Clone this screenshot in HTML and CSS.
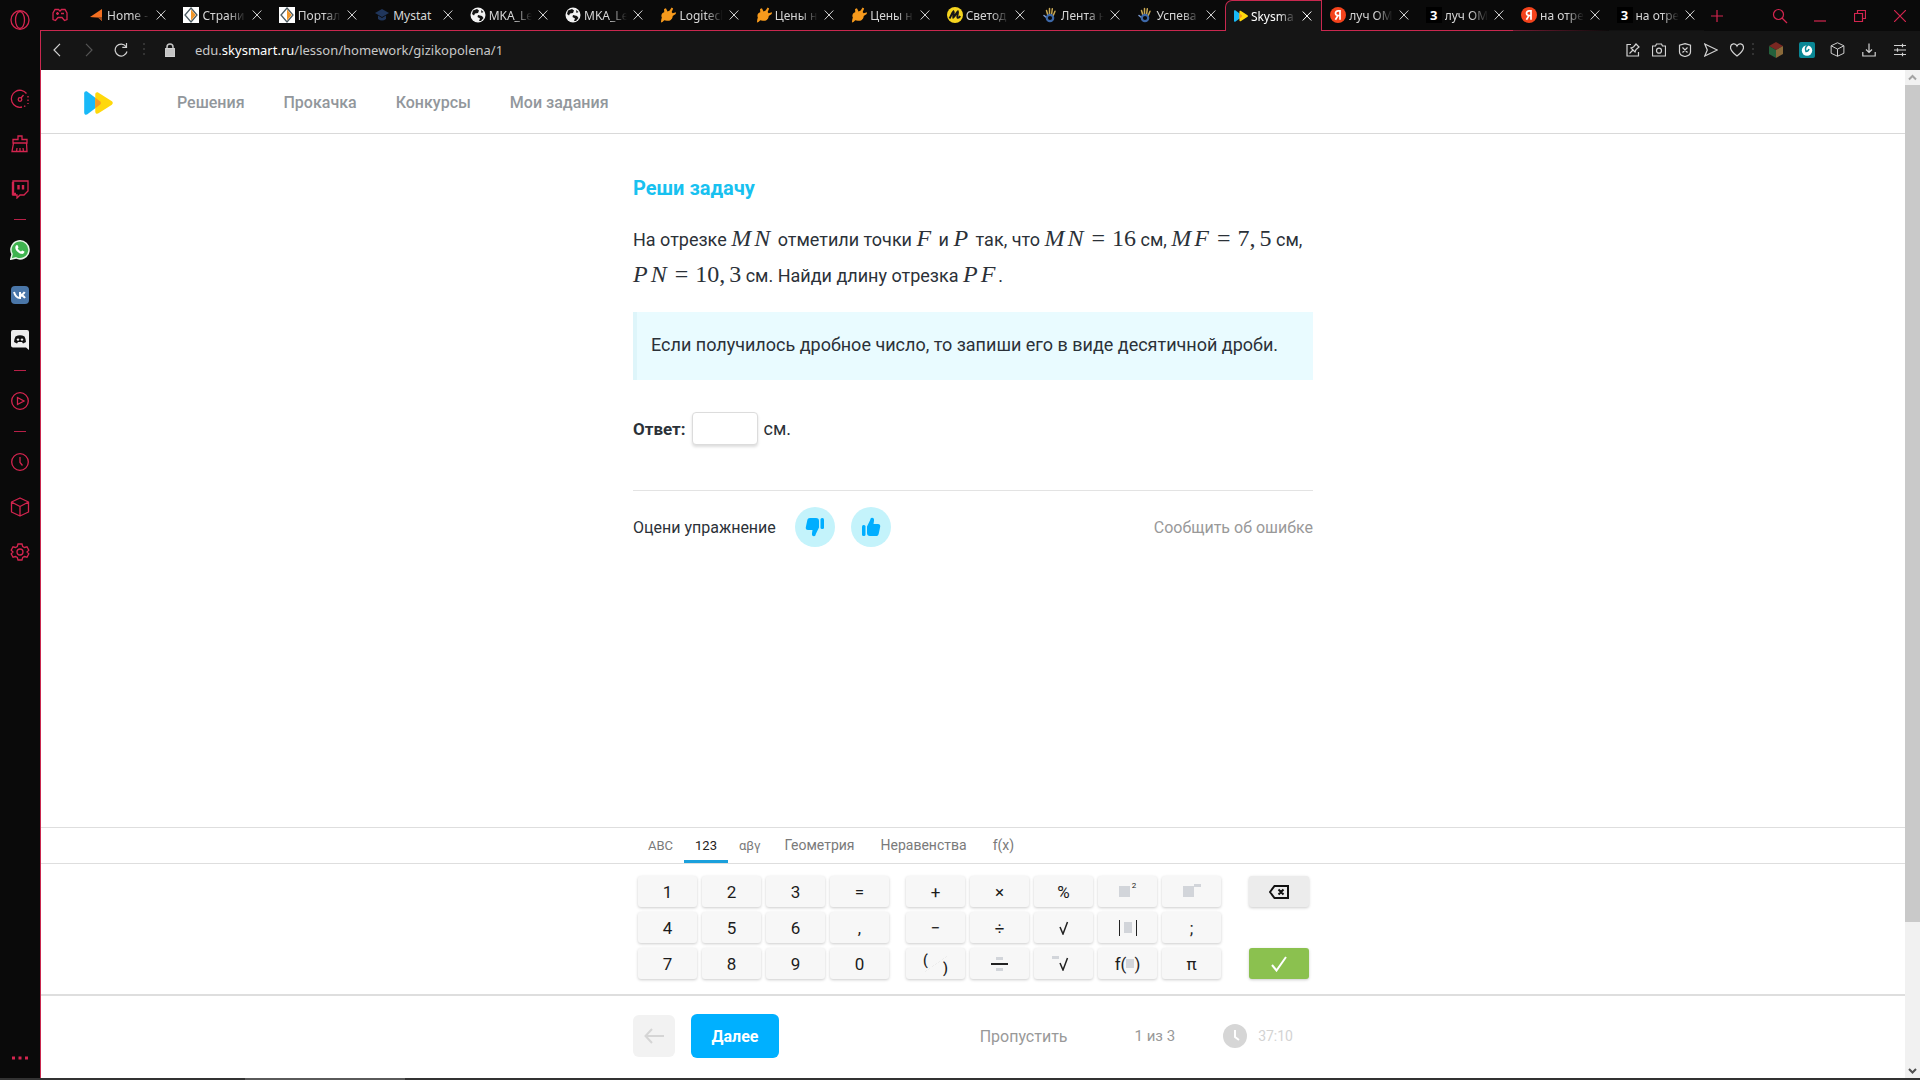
FILE: index.html
```html
<!DOCTYPE html>
<html lang="ru">
<head>
<meta charset="utf-8">
<meta name="viewport" content="width=device-width, initial-scale=1">
<title>Skysmart</title>
<link rel="stylesheet" href="styles.css">
</head>
<body>
<svg class="sprite" aria-hidden="true">
  <symbol id="x" viewBox="0 0 10 10"><path d="M.7.5l8.6 9M9.3.5l-8.6 9" fill="none" stroke="currentColor"/></symbol>
  <symbol id="diamond" viewBox="0 0 16 16"><path fill="#fff" d="M0 0h16v16H0z"/><path d="M8 1L14 8 8 15 2 8z" fill="#fff" stroke="#4b5a61" stroke-width="1.300"/><path d="M8 2.500l4.700 5.500L8 13.500z" fill="#f0962a"/></symbol>
  <symbol id="globe" viewBox="0 0 16 16"><circle cx="8" cy="8" r="7.500" fill="#f2f2f2"/><path d="M3 3.500l4-1.500 2 1.500-1 2.500-3 .5-1 2-2-1.500zM8 8l4 1 1.500 2-2.500 3H9l1-2.500L7.500 10zM11 3l2.500 2-2 1z" fill="#111"/></symbol>
  <symbol id="plug" viewBox="0 0 17 17"><path d="M1 16.500c.3-2 .2-3.500 1-5C.8 8.500 2 6 4.500 5.500L4.300 2l2-.8L8 4.700l2.300-.9 2-3.300 1.700 1-1.600 3.700 1 1.500L17 5.500l-.3 2-3.200 2c0 3-2.500 5.500-5.500 5-1.500.2-2.500-.2-3.500-.5-1 1.300-2 2.300-3.500 2.500z" fill="#f79a1c"/></symbol>
  <symbol id="em" viewBox="0 0 16 16"><circle cx="8" cy="8" r="8" fill="#f6d51f"/><path d="M2.500 11.500C4 9 5 6 6.500 4.500c1 1-.7 5-.2 6C8 9.500 9 6 10.800 4.500c.8 1.500-1.300 5-.2 6.200 1 .4 2-.6 2.700-1.500" fill="none" stroke="#171717" stroke-width="2"/></symbol>
  <symbol id="hand" viewBox="0 0 14 16"><path d="M3.500 3.500L4.800 8M6.500 1.500V8M9.300 1.800L8.500 8M12 4.300L10 9" stroke="#c9a954" stroke-width="1.500" stroke-linecap="round"/><path d="M1 8.500l2.500 2" stroke="#7b9ad0" stroke-width="1.600" stroke-linecap="round"/><circle cx="7" cy="11" r="3.200" fill="none" stroke="#3d68a8" stroke-width="2.200"/></symbol>
  <symbol id="sky" viewBox="0 0 31 26"><path d="M0 2.500C0 .5 2-.3 3.500.8L17 11c1.500 1.200 1.500 2.800 0 4L3.500 25.200C2 26.300 0 25.500 0 23.500z" fill="#18b9f8"/><path d="M12 3.500c0-2 2-2.800 3.500-1.700L30 11.200c1.300 1 1.300 2.600 0 3.600l-14.500 9.400C14 25.300 12 24.500 12 22.500z" fill="#ffd80b"/><path d="M12 7.300L17 11c1.500 1.200 1.500 2.800 0 4l-5 3.700z" fill="#f89b1f"/></symbol>
  <symbol id="ya" viewBox="0 0 16 16"><circle cx="8" cy="8" r="8" fill="#f4431c"/><path d="M10 12.700V3.800H8.200c-1.800 0-2.700 1-2.700 2.500 0 1.400.8 2.200 2.800 2.200H10M8 8.500l-2.600 4.200" fill="none" stroke="#fff" stroke-width="1.700"/></symbol>
  <symbol id="box" viewBox="0 0 20 20"><path d="M10 1l8.500 4v10L10 19l-8.500-4V5zM1.500 5l8.500 4.500L18.500 5M10 9.500V19" fill="none" stroke="currentColor" stroke-width="1.300" stroke-linejoin="round"/></symbol>
  <symbol id="thumb" viewBox="0 0 20 20"><rect x="1" y="8" width="3.500" height="11" rx="1.500" fill="#00aeff"/><path d="M6 9.500L9.200 3C9.500 1.500 10 .8 11 .8c1.600 0 2.300 1.200 2 3L12.500 7H17c1.700 0 2.500 1.200 2.200 2.700l-1.500 7c-.3 1.500-1.200 2.300-2.700 2.300H9c-2 0-3-1-3-3z" fill="#00aeff"/></symbol>
</svg>

<div class="browser">
  <aside class="sidebar">
    <button class="opera" aria-label="Меню"><svg width="20" height="20" viewBox="0 0 20 20"><ellipse cx="10" cy="10" rx="9" ry="9.300" /><ellipse cx="10" cy="10" rx="4.500" ry="8.500"/></svg></button>
    <button class="side" aria-label="Speed"><svg width="20" height="20" viewBox="0 0 20 20"><path d="M12 18a8.500 8.500 0 1 1 4.500-13.500"/><path d="M18 7v8M14 17.500l2-1" stroke-dasharray="1.500 2"/><circle cx="10" cy="10.500" r="1.800"/><path d="M11 9l2.500-3"/></svg></button>
    <button class="side" aria-label="Очистка"><svg width="20" height="20" viewBox="0 0 20 20"><path d="M3 9V5.500h5V2h4v3.500h5V9zM3.500 9L2 17.500h15L16.500 9M6.500 17.500L7 14M10 17.500V14M13.500 17.500L13 14"/></svg></button>
    <button class="side" aria-label="Twitch"><svg width="20" height="20" viewBox="0 0 20 20"><path d="M3 2h15v10l-4 4h-4l-3 3v-3H3z"/><path d="M3 3v12h3M8.500 6v4.500M13 6v4.500" stroke-width="2.400"/></svg></button>
    <hr class="sep">
    <button class="side" aria-label="WhatsApp"><svg width="20" height="20" viewBox="0 0 20 20"><path d="M.8 19.200l1.300-5A9 9 0 1 1 6 17.900z" fill="#3fb34f" stroke="#e8f5e8" stroke-width="1.500"/><path d="M6 5.500c1-1 1.600-.5 2 .6l.5 1.300-.8 1.200c.8 1.400 1.900 2.300 3.300 3l1.200-1 2.300 1c-.2 2-1.700 2.700-3.500 2.200C8 13 5.300 10 5.300 7.500c0-.8.200-1.500.7-2z" fill="#fff" stroke="none"/></svg></button>
    <button class="side" aria-label="ВКонтакте"><svg width="20" height="20" viewBox="0 0 20 20"><rect x="1" y="1" width="18" height="18" rx="4" fill="#4a76a8" stroke="none"/><path d="M4 7c1 3.500 3 6 6 6V7M10 10c2 0 3.500-1 4.700-3M10 10c2.500 0 3.700 1 5 3" stroke="#fff" stroke-width="2"/></svg></button>
    <button class="side" aria-label="Discord"><svg width="20" height="20" viewBox="0 0 20 20"><path d="M3 0h14a2 2 0 0 1 2 2v18l-3-2.500H3a2 2 0 0 1-2-2V2a2 2 0 0 1 2-2z" fill="#eee" stroke="none"/><path d="M5.500 6.500Q10 4 14.500 6.500 16 9.500 16 12l-3 1.500-1-1.500H8l-1 1.500L4 12q0-2.500 1.500-5.500z" fill="#111" stroke="none"/><circle cx="8" cy="9.600" r="1.200" fill="#eee" stroke="none"/><circle cx="12" cy="9.600" r="1.200" fill="#eee" stroke="none"/></svg></button>
    <hr class="sep">
    <button class="side" aria-label="Плеер"><svg width="20" height="20" viewBox="0 0 20 20"><circle cx="10" cy="10" r="8.300"/><path d="M7.500 6.500v7l6.500-3.500z"/></svg></button>
    <hr class="sep">
    <button class="side" aria-label="История"><svg width="20" height="20" viewBox="0 0 20 20"><circle cx="10" cy="10" r="8.300"/><path d="M10 5v5.500l2.500 3"/></svg></button>
    <button class="side" aria-label="Расширения"><svg width="20" height="20"><use href="#box"/></svg></button>
    <button class="side" aria-label="Настройки"><svg width="20" height="20" viewBox="0 0 20 20"><circle cx="10" cy="10" r="3"/><path d="M8 2h4l.7 2.500 1.800 1 2.500-.7 1.800 3.300L17 10l1.800 1.900-1.800 3.300-2.500-.7-1.800 1L12 18H8l-.7-2.500-1.800-1-2.500.7-1.800-3.300L3 10 1.200 8.100 3 4.800l2.500.7 1.800-1z"/></svg></button>
    <button class="dots" aria-label="Ещё"><svg width="20" height="6" viewBox="0 0 20 6"><path d="M2 3h3M8.500 3h3M15 3h3" stroke-width="3"/></svg></button>
  </aside>

  <div class="window">
    <div class="tabbar">
      <button class="gx" aria-label="GX"><svg width="16" height="14" viewBox="0 0 16 14"><path d="M3 1.500h3.500L8 3l1.500-1.500H13L15 5v6.500l-2.500 1L10 9.500H6l-2.500 3-2.500-1V5zM4 5.500h3M9 5.500h3M5.500 4v3" fill="none" stroke="currentColor" stroke-width="1.300"/></svg></button>
      <div class="tabs">
        <div class="tab"><svg class="fav"  viewBox="0 0 16 16"><path d="M14 2v12l-4-3.500L2 10z" fill="#f36f21"/><path d="M2 10l8 .5 4 3.500v-4z" fill="#9d4a1c"/></svg><button class="title">Home - </button><button class="close" aria-label="Закрыть"><svg><use href="#x"/></svg></button></div>
        <div class="tab"><svg class="fav"><use href="#diamond"/></svg><button class="title">Страни</button><button class="close" aria-label="Закрыть"><svg><use href="#x"/></svg></button></div>
        <div class="tab"><svg class="fav"><use href="#diamond"/></svg><button class="title">Портал</button><button class="close" aria-label="Закрыть"><svg><use href="#x"/></svg></button></div>
        <div class="tab"><svg class="fav" viewBox="0 0 16 16"><path d="M1 6l7-4 7 4-7 4zM4 8.500V12q4 3 8 0V8.500L8 11z" fill="#20365c"/></svg><button class="title title-full">Mystat</button><button class="close" aria-label="Закрыть"><svg><use href="#x"/></svg></button></div>
        <div class="tab"><svg class="fav"><use href="#globe"/></svg><button class="title">MKA_Le</button><button class="close" aria-label="Закрыть"><svg><use href="#x"/></svg></button></div>
        <div class="tab"><svg class="fav"><use href="#globe"/></svg><button class="title">MKA_Le</button><button class="close" aria-label="Закрыть"><svg><use href="#x"/></svg></button></div>
        <div class="tab"><svg class="fav"><use href="#plug"/></svg><button class="title">Logitecl</button><button class="close" aria-label="Закрыть"><svg><use href="#x"/></svg></button></div>
        <div class="tab"><svg class="fav"><use href="#plug"/></svg><button class="title">Цены н</button><button class="close" aria-label="Закрыть"><svg><use href="#x"/></svg></button></div>
        <div class="tab"><svg class="fav"><use href="#plug"/></svg><button class="title">Цены н</button><button class="close" aria-label="Закрыть"><svg><use href="#x"/></svg></button></div>
        <div class="tab"><svg class="fav"><use href="#em"/></svg><button class="title">Светод</button><button class="close" aria-label="Закрыть"><svg><use href="#x"/></svg></button></div>
        <div class="tab"><svg class="fav"><use href="#hand"/></svg><button class="title">Лента н</button><button class="close" aria-label="Закрыть"><svg><use href="#x"/></svg></button></div>
        <div class="tab"><svg class="fav"><use href="#hand"/></svg><button class="title">Успева</button><button class="close" aria-label="Закрыть"><svg><use href="#x"/></svg></button></div>
        <div class="tab tab-active"><svg class="fav"><use href="#sky"/></svg><button class="title">Skysma</button><button class="close" aria-label="Закрыть"><svg><use href="#x"/></svg></button></div>
        <div class="tab"><svg class="fav"><use href="#ya"/></svg><button class="title">луч ОМ</button><button class="close" aria-label="Закрыть"><svg><use href="#x"/></svg></button></div>
        <div class="tab"><span class="fav three">3</span><button class="title">луч ОМ</button><button class="close" aria-label="Закрыть"><svg><use href="#x"/></svg></button></div>
        <div class="tab tab-fade"><svg class="fav"><use href="#ya"/></svg><button class="title">на отре</button><button class="close" aria-label="Закрыть"><svg><use href="#x"/></svg></button></div>
        <div class="tab tab-plain"><span class="fav three">3</span><button class="title">на отре</button><button class="close" aria-label="Закрыть"><svg><use href="#x"/></svg></button></div>
      </div>
      <div class="wincontrols">
        <button aria-label="Новая вкладка"><svg width="12" height="12" viewBox="0 0 12 12"><path d="M6 0v12M0 6h12"/></svg></button>
        <button class="push" aria-label="Поиск"><svg width="16" height="16" viewBox="0 0 16 16"><circle cx="6.500" cy="6.500" r="5"/><path d="M10 10l5 5"/></svg></button>
        <button aria-label="Свернуть"><svg width="12" height="12" viewBox="0 0 12 12"><path d="M0 11h12"/></svg></button>
        <button aria-label="Развернуть"><svg width="12" height="12" viewBox="0 0 12 12"><path d="M.5 3.500h8v8h-8zM3.500 3V.5h8v8H9"/></svg></button>
        <button aria-label="Закрыть окно"><svg width="12" height="12" viewBox="0 0 12 12"><path d="M0 0l12 12M12 0L0 12"/></svg></button>
      </div>
    </div>

    <div class="address">
      <button class="nav" aria-label="Назад"><svg width="8" height="14" viewBox="0 0 8 14"><path d="M7 .8L1 7l6 6.200"/></svg></button>
      <button class="nav nav-off" aria-label="Вперёд"><svg width="8" height="14" viewBox="0 0 8 14"><path d="M1 .8L7 7l-6 6.200"/></svg></button>
      <button class="nav" aria-label="Обновить"><svg width="14" height="14" viewBox="0 0 14 14"><path d="M13 8.500A6 6 0 1 1 12 3.500M12.500 0v4.300H8.300"/></svg></button>
      <span class="vdots"></span>
      <svg class="lock" width="10" height="14" viewBox="0 0 10 14"><path d="M2 6V4a3 3 0 0 1 6 0v2" fill="none" stroke="#c4c4c4" stroke-width="1.500"/><rect y="5.500" width="10" height="8" rx="1" fill="#c4c4c4"/></svg>
      <div class="url" role="textbox" aria-label="Адрес">edu.<span class="host">skysmart.ru</span>/lesson/homework/gizikopolena/1</div>
      <div class="tools">
        <button aria-label="Закрепить"><svg width="14" height="14" viewBox="0 0 14 14"><path d="M5 1.500H1v11.500h11.500V9M3.500 10.500L7 7M5 5l4 4 1-2.500L13 4 10 1 7.500 4z"/></svg></button>
        <button aria-label="Снимок"><svg width="14" height="14" viewBox="0 0 14 14"><path d="M.5 3h3L4.500 1h5l1 2h3v10H.5z"/><circle cx="7" cy="7.700" r="2.500"/></svg></button>
        <button aria-label="Блокировка"><svg width="14" height="14" viewBox="0 0 14 14"><path d="M7 .7l5.500 1.500V9c0 2.500-3 4-5.500 4.500C4.500 13 1.500 11.500 1.500 9V2.200zM4.500 4.500l5 5M9.500 4.500l-5 5"/></svg></button>
        <button aria-label="Отправить"><svg width="14" height="14" viewBox="0 0 14 14"><path d="M.8 1l12.500 6L.8 13l2.500-6z"/></svg></button>
        <button aria-label="Избранное"><svg width="14" height="14" viewBox="0 0 14 14"><path d="M7 13C2.500 9.500.5 7.500.5 4.500c0-4 5-5 6.500-1.500C8.500-.5 13.500.5 13.500 4.500 13.500 7.500 11.500 9.500 7 13z"/></svg></button>
        <span class="vdots"></span>
        <div class="exts">
          <button aria-label="Кубик"><svg width="16" height="16" viewBox="0 0 16 16"><g stroke="none"><path d="M8 0l7 4-7 4-7-4z" fill="#7a2722"/><path d="M1 4l7 4v8l-7-4z" fill="#24613c"/><path d="M15 4L8 8v8l7-4z" fill="#8a6a3a"/></g></svg></button>
          <button aria-label="Переводчик"><svg width="16" height="16" viewBox="0 0 16 16"><rect width="16" height="16" rx="2" fill="#0a8795" stroke="none"/><circle cx="8" cy="8.500" r="5.200" fill="#fff" stroke="none"/><path d="M9 3C6.500 4.500 6 7 7 9.500c1.500 0 2.500-1 3-2.500" stroke="#0a8795" stroke-width="1.500"/></svg></button>
          <button aria-label="Расширения"><svg width="15" height="15"><use href="#box"/></svg></button>
          <button aria-label="Загрузки"><svg width="14" height="14" viewBox="0 0 14 14"><path d="M7 .5v9M4 6.500l3 3 3-3M.8 9v4h12.400V9"/></svg></button>
          <button aria-label="Настройка"><svg width="14" height="14" viewBox="0 0 14 14"><path d="M1 2.500h12M1 7h12M1 11.500h12M9.500.8v3.400M4.500 5.300v3.400M9.500 9.800v3.400"/></svg></button>
        </div>
      </div>
    </div>

    <div class="viewport">
      <div class="page">
        <header class="header">
          <a class="logo" href="#" aria-label="Skysmart"><svg width="31" height="24"><use href="#sky"/></svg></a>
          <nav class="menu"><a href="#">Решения</a><a href="#">Прокачка</a><a href="#">Конкурсы</a><a href="#">Мои задания</a></nav>
        </header>

        <main class="content">
          <article class="column">
            <h1>Реши задачу</h1>
            <p class="task">На отрезке <span class="math"><i>M</i><i>N</i></span> отметили точки <span class="math"><i>F</i></span> и <span class="math"><i>P</i></span> так, что <span class="math"><i>M</i><i>N</i><b>=</b>16</span> см, <span class="math"><i>M</i><i>F</i><b>=</b>7<u>,</u>5</span> см, <span class="math"><i>P</i><i>N</i><b>=</b>10<u>,</u>3</span> см. Найди длину отрезка <span class="math"><i>P</i><i>F</i></span>.</p>
            <div class="hint">Если получилось дробное число, то запиши его в виде десятичной дроби.</div>
            <div class="answer"><label for="answer">Ответ:</label><input id="answer" type="text"><span>см.</span></div>
            <div class="rate">
              <span class="rate-label">Оцени упражнение</span>
              <button class="vote" aria-label="Не нравится"><svg class="down" width="20" height="20"><use href="#thumb"/></svg></button>
              <button class="vote" aria-label="Нравится"><svg width="20" height="20"><use href="#thumb"/></svg></button>
              <a class="report" href="#">Сообщить об ошибке</a>
            </div>
          </article>
        </main>

        <section class="keyboard">
          <div class="modes"><div class="modes-in"><button class="short">ABC</button><button class="short on">123</button><button class="short">αβγ</button><button>Геометрия</button><button>Неравенства</button><button>f(x)</button></div></div>
          <div class="keys">
            <div class="pad four">
              <button>1</button><button>2</button><button>3</button><button>=</button>
              <button>4</button><button>5</button><button>6</button><button>,</button>
              <button>7</button><button>8</button><button>9</button><button>0</button>
            </div>
            <div class="pad five">
              <button>+</button><button>×</button><button>%</button>
              <button aria-label="Квадрат"><span class="sq"></span><sup>2</sup></button>
              <button aria-label="Степень"><span class="sq"></span><span class="bit bit-up"></span></button>
              <button>−</button><button>÷</button><button aria-label="Корень"><svg width="10" height="14" viewBox="0 0 10 14"><path d="M1 6l3 7L8.500 1" fill="none" stroke="#222" stroke-width="1.500"/></svg></button>
              <button class="abs" aria-label="Модуль"><span class="sq"></span></button>
              <button>;</button>
              <button class="paren"><span>(</span><span>)</span></button>
              <button class="frac" aria-label="Дробь"><span class="bit"></span><span class="bar"></span><span class="bit"></span></button>
              <button class="root" aria-label="Корень степени"><span class="bit bit-up"></span><svg width="10" height="14" viewBox="0 0 10 14"><path d="M1 6l3 7L8.500 1" fill="none" stroke="#222" stroke-width="1.500"/></svg></button>
              <button>f(<span class="sq sq-s"></span>)</button><button>π</button>
            </div>
            <div class="acts">
              <button class="del" aria-label="Стереть"><svg width="20" height="14" viewBox="0 0 20 14"><path d="M5.500 1H19v12H5.500L1 7zM9.500 4.500l5 5M14.500 4.500l-5 5" fill="none" stroke="#111" stroke-width="2"/></svg></button>
              <button class="ok" aria-label="Готово"><svg width="16" height="16" viewBox="0 0 16 16"><path d="M1 9l4.500 5.500L15 1" fill="none" stroke="#fff" stroke-width="2"/></svg></button>
            </div>
          </div>
        </section>

        <footer class="footer">
          <div class="footer-in">
            <button class="prev" aria-label="Назад"><svg width="20" height="16" viewBox="0 0 20 16"><path d="M20 8H1.500M8 1L1.500 8 8 15" fill="none" stroke="#d5d5d5" stroke-width="2"/></svg></button>
            <button class="next">Далее</button>
            <div class="status">
              <a class="skip" href="#">Пропустить</a><span class="count">1 из 3</span>
              <svg width="24" height="24" viewBox="0 0 24 24"><circle cx="12" cy="12" r="12" fill="#d6d6d6"/><path d="M12 6v7l4 3" fill="none" stroke="#fff" stroke-width="2"/></svg>
              <span class="time">37:10</span>
            </div>
          </div>
        </footer>
      </div>
      <div class="scroll" aria-hidden="true">
        <svg width="15" height="15" viewBox="0 0 15 15"><path d="M4 9.500L7.500 6 11 9.500" fill="none" stroke="#a3a3a3" stroke-width="2"/></svg>
        <div class="thumb"></div><div class="track"></div>
        <svg width="15" height="15" viewBox="0 0 15 15"><path d="M4 6l3.500 3.500L11 6" fill="none" stroke="#505050" stroke-width="2"/></svg>
      </div>
    </div>
  </div>
</div>
<div class="taskbar"><div class="task-item"></div></div>
</body>
</html>
```
FILE: styles.css
```css
* { box-sizing: border-box; }
body {
  margin: 0;
  height: 100vh;
  display: flex;
  flex-direction: column;
  overflow: hidden;
  font-family: Roboto, "Liberation Sans", sans-serif;
  color: #2b3138;
  background: #fff;
}
button { border: 0; padding: 0; margin: 0; background: none; color: inherit; font: inherit; cursor: pointer; }
a { color: inherit; text-decoration: none; }
svg { display: block; flex: none; }
.sprite { position: absolute; width: 0; height: 0; }

.browser { flex: 1; min-height: 0; display: flex; background: #0a0a0a; }
.window { flex: 1; min-width: 0; display: flex; flex-direction: column; }

/* sidebar */
.sidebar { width: 40px; display: flex; flex-direction: column; align-items: center; color: #d4254f; }
.sidebar svg { fill: none; stroke: currentColor; stroke-width: 1.3; }
.opera { height: 40px; margin-bottom: 36px; }
.side { height: 45px; }
.sep { width: 12px; height: 1px; margin: 8px 0 7px; border: 0; background: #b92048; }
.dots { margin-top: auto; height: 40px; }

/* tab strip */
.tabbar { height: 31px; display: flex; color: #d4254f; }
.gx { width: 40px; display: flex; justify-content: center; align-items: center; border-bottom: 1px solid #c9284f; }
.tabs { flex: 1; display: flex; min-width: 0; }
.tab {
  flex: 1 1 0;
  min-width: 0;
  display: flex;
  align-items: center;
  padding: 0 9px 0 8px;
  border-bottom: 1px solid #c9284f;
  color: #d6d6d6;
  font: 12px "Noto Sans", sans-serif;
}
.tab-active { background: #151515; color: #fff; border: 1px solid #c9284f; border-bottom: 0; border-radius: 7px 0 0 0; }
.tab-fade { border-image: linear-gradient(90deg, #7c1c35, #0a0a0a) 1; }
.tab-plain { border-color: #111; }
.fav { width: 16px; height: 16px; flex: none; }
.tab-active .fav { width: 14px; }
.three { font-weight: 700; line-height: 16px; text-align: center; color: #fff; background: #000; font-size: 13px; }
.title {
  flex: 1;
  min-width: 0;
  margin-left: 3px;
  text-align: left;
  white-space: nowrap;
  -webkit-mask-image: linear-gradient(90deg, #000 60%, transparent);
  mask-image: linear-gradient(90deg, #000 60%, transparent);
}
.title-full { -webkit-mask-image: none; mask-image: none; }
.close { margin-left: 6px; }
.close svg { width: 10px; height: 10px; }
.wincontrols { width: 216px; display: flex; align-items: center; }
.wincontrols button { width: 40px; display: flex; justify-content: center; }
.wincontrols button:first-child { width: 26px; }
.wincontrols .push { margin-left: 30px; }
.wincontrols svg { fill: none; stroke: currentColor; stroke-width: 1.2; }

/* address bar */
.address { height: 39px; padding-bottom: 2px; display: flex; align-items: center; background: #151515; border-left: 1px solid #c9284f; color: #d2d2d2; }
.address svg { fill: none; stroke: currentColor; stroke-width: 1.2; }
.nav { width: 32px; display: flex; justify-content: center; }
.nav-off { color: #555; }
.vdots { width: 2px; height: 14px; margin: 0 6px; background: repeating-linear-gradient(#333 0 2px, transparent 2px 5px); }
.lock { margin: 0 20px 0 14px; }
.url { flex: 1; font: 13px "Noto Sans", sans-serif; color: #c8c8c8; }
.host { color: #fff; }
.tools, .exts { display: flex; align-items: center; }
.tools .vdots { margin-left: 2px; }
.tools button { width: 26px; display: flex; justify-content: center; }
.tools .exts button { width: 31px; }
.exts { margin-right: 5px; }

/* page */
.viewport { flex: 1; min-height: 0; display: flex; background: #fff; border-left: 1px solid #c9284f; }
.page { flex: 1; min-width: 0; display: flex; flex-direction: column; }
.scroll { width: 15px; display: flex; flex-direction: column; background: #f1f1f1; }
.thumb { flex: 837; background: #c9c9c9; }
.track { flex: 141; }

.header { height: 64px; display: flex; align-items: center; padding: 2px 0 0 42px; border-bottom: 1px solid #d9d9d9; }
.logo { width: 94px; }
.menu { display: flex; gap: 39px; font-size: 16px; font-weight: 500; color: #92979c; }

.content { flex: 1; }
.column { width: 680px; max-width: 100%; margin: 0 auto; padding-top: 40px; }
h1 { margin: 0 0 20px; font-size: 20px; line-height: 28px; font-weight: 700; color: #18c1f0; }
.task { margin: 0 0 18px; font-size: 18px; line-height: 36px; }
.math { font: 24px/30px "Liberation Serif", serif; white-space: nowrap; }
.math i { margin-right: 3px; }
.math b { margin: 0 7px 0 5px; font-weight: 400; }
.math u { margin-right: 4px; text-decoration: none; }
.hint { padding: 15px 14px 17px; border-left: 4px solid #def5fa; background: #e9fbff; font-size: 18px; line-height: 36px; }
.answer { display: flex; align-items: center; gap: 6px; margin: 32px 0 45px; font-size: 18px; }
.answer label { font-size: 17px; font-weight: 700; }
.answer input { width: 66px; height: 33px; border: 1px solid #dcdcdc; border-radius: 4px; box-shadow: 0 2px 3px #ddd; background: #fff; font: inherit; }
.rate { display: flex; align-items: center; gap: 16px; padding-top: 16px; border-top: 1px solid #e3e3e3; font-size: 16px; }
.rate-label { margin-right: 3px; }
.vote { width: 40px; height: 40px; border-radius: 50%; background: #c4f3fb; display: flex; align-items: center; justify-content: center; }
.down { transform: rotate(180deg); }
.report { margin-left: auto; color: #999; }

/* math keyboard */
.keyboard { border-top: 1px solid #dedede; }
.modes { border-bottom: 1px solid #dedede; }
.modes-in, .keys, .footer-in { width: 680px; max-width: 100%; margin: 0 auto; display: flex; }
.modes-in { padding-left: 4px; }
.modes button { height: 35px; padding: 2px 13px 0; font-size: 14px; color: #7a7a7a; border-bottom: 3px solid transparent; }
.modes .short { padding: 2px 11px 0; font-size: 13px; }
.modes .on { color: #222; border-color: #1ba0dc; }
.keys { padding: 12px 4px 15px 5px; color: #1c1c1c; }
.pad { display: grid; gap: 5px; grid-auto-rows: 31px; }
.four { grid-template-columns: repeat(4, 59px); }
.five { grid-template-columns: repeat(5, 59px); margin-left: 17px; }
.pad button, .acts button { display: flex; align-items: center; justify-content: center; border-radius: 3px; background: #f7f7f7; box-shadow: 0 1px 3px #ccc; font-size: 17px; }
.acts { margin-left: auto; display: flex; flex-direction: column; justify-content: space-between; }
.acts button { width: 60px; height: 31px; }
.acts .del { background: #ececec; }
.acts .ok { background: #8bc14f; }
.sq { width: 11px; height: 11px; background: #d2d5da; }
.sq-s { width: 8px; height: 9px; }
.pad sup { font-size: 8px; align-self: flex-start; margin: 4px 0 0 2px; line-height: 12px; }
.bit { width: 7px; height: 3px; background: #d2d5da; }
.bit-up { margin-bottom: 12px; }
.pad .root { padding-right: 6px; }
.abs .sq { width: 16px; border: solid #f7f7f7; border-width: 0 4px; }
.pad .abs::before, .pad .abs::after { content: ""; width: 1px; height: 16px; background: #222; }
.pad .frac { flex-direction: column; gap: 3px; }
.bar { width: 17px; height: 2px; background: #222; }
.pad .paren {
  justify-content: space-between;
  padding: 0 17px;
  font-size: 14px;
  font-weight: 500;
  background: linear-gradient(145deg, transparent 49%, #ececec 49% 51%, transparent 51%) center / 24px 18px no-repeat #f7f7f7;
}
.paren span:first-child { margin-bottom: 8px; }
.paren span:last-child { margin-top: 8px; }

/* footer */
.footer { border-top: 2px solid #dedede; }
.footer-in { height: 82px; padding-bottom: 2px; align-items: center; }
.prev { width: 42px; height: 42px; border-radius: 6px; background: #f2f2f2; display: flex; align-items: center; justify-content: center; }
.next { width: 88px; height: 44px; margin-left: 16px; border-radius: 6px; background: #00b0ff; color: #fff; font-size: 16px; font-weight: 700; }
.status { margin-left: auto; padding-right: 20px; display: flex; align-items: center; font-size: 16px; color: #999; }
.count { margin: 0 48px 0 67px; font-size: 15px; }
.time { margin-left: 11px; font-size: 14px; color: #d3d3d3; white-space: nowrap; }

.taskbar { height: 2px; background: #333; padding-left: 205px; }
.task-item { width: 160px; height: 2px; background: #5a5a5a; }
.taskbar { padding-left: 245px; }
```
